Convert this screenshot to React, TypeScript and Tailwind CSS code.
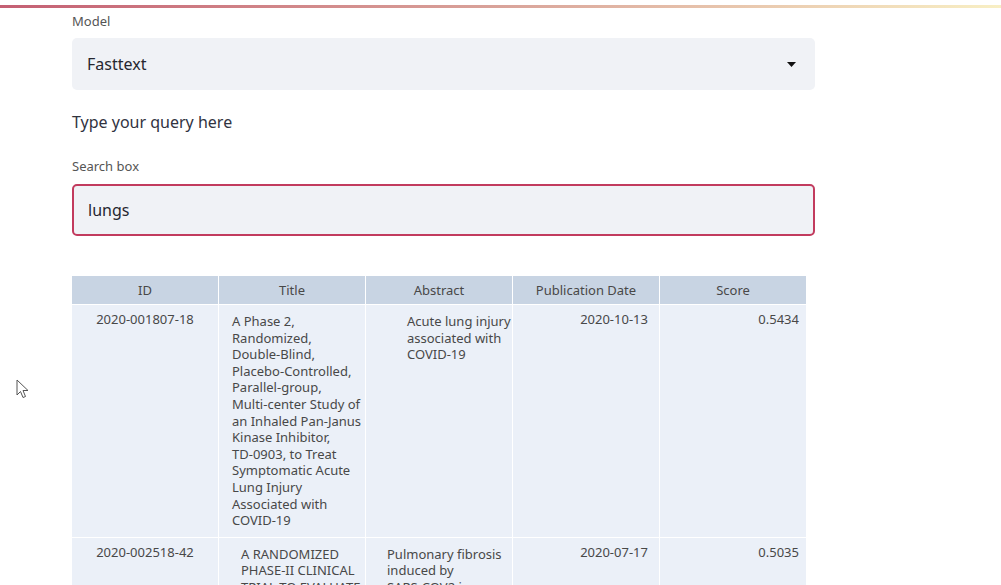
import { useState } from 'react';

const COLUMNS = ['ID', 'Title', 'Abstract', 'Publication Date', 'Score'];

const ROWS = [
  {
    id: '2020-001807-18',
    title: [
      'A Phase 2,',
      'Randomized,',
      'Double-Blind,',
      'Placebo-Controlled,',
      'Parallel-group,',
      'Multi-center Study of',
      'an Inhaled Pan-Janus',
      'Kinase Inhibitor,',
      'TD-0903, to Treat',
      'Symptomatic Acute',
      'Lung Injury',
      'Associated with',
      'COVID-19',
    ],
    titlePad: 'pl-[13px]',
    abstract: ['Acute lung injury', 'associated with', 'COVID-19'],
    abstractPad: 'pl-[41px]',
    date: '2020-10-13',
    score: '0.5434',
  },
  {
    id: '2020-002518-42',
    title: ['A RANDOMIZED', 'PHASE-II CLINICAL', 'TRIAL TO EVALUATE', 'THE EFFICACY'],
    titlePad: 'pl-[22px]',
    abstract: ['Pulmonary fibrosis', 'induced by', 'SARS-COV2 in', 'patients'],
    abstractPad: 'pl-[21px]',
    date: '2020-07-17',
    score: '0.5035',
  },
];

function Lines({ lines }: { lines: string[] }) {
  return (
    <>
      {lines.map((l, i) => (
        <div key={i} className="whitespace-nowrap">{l}</div>
      ))}
    </>
  );
}

export default function App() {
  const [query, setQuery] = useState('lungs');

  return (
    <div
      className="relative w-[1001px] h-[585px] overflow-hidden bg-white text-[#31333f]"
      style={{ fontFamily: '"Noto Sans", "Open Sans", sans-serif' }}
    >
      <div className="h-[5px]" />
      <div className="h-[3px] bg-gradient-to-r from-[#c45f73] via-[#d9a39a] to-[#f8efc4]" />

      <div className="pl-[72px] w-[815px]">
        <div className="text-[13px] text-[#555] leading-none mt-[7px]">Model</div>

        <div className="mt-[10px] h-[52px] bg-[#f0f2f6] rounded-[5px] flex items-center justify-between pl-[15px] pr-[19px]">
          <span className="text-[16px] text-[#262730]">Fasttext</span>
          <svg width="9" height="5" viewBox="0 0 9 5">
            <path d="M0 0 L9 0 L4.5 5 Z" fill="#111" />
          </svg>
        </div>

        <div className="mt-[21px] text-[16px] leading-[22px] text-[#31333f]">Type your query here</div>

        <div className="mt-[27px] text-[13px] text-[#555] leading-none">Search box</div>

        <div className="mt-[11px] h-[52px] bg-[#f0f2f6] rounded-[5px] border-2 border-[#c23b5e] flex items-center pl-[14px]">
          <input
            value={query}
            onChange={(e) => setQuery(e.target.value)}
            className="bg-transparent outline-none text-[16px] text-[#262730] w-full caret-black"
            style={{ fontFamily: '"Noto Sans", "Open Sans", sans-serif' }}
          />
        </div>
      </div>

      <div className="ml-[72px] mt-[40px] w-[734px] text-[13px] leading-[16.6px] text-[#484848]">
        <div className="grid grid-cols-5 gap-x-[1px]">
          {COLUMNS.map((c) => (
            <div key={c} className="h-[28px] bg-[#c8d4e3] flex items-center justify-center">
              {c}
            </div>
          ))}
        </div>
        {ROWS.map((r) => (
          <div key={r.id} className="grid grid-cols-5 gap-x-[1px] mt-[1px]">
            <div className="bg-[#ebf0f8] text-center pt-[6px]">{r.id}</div>
            <div className={`bg-[#ebf0f8] ${r.titlePad} pt-[8px] pb-[8px]`}>
              <Lines lines={r.title} />
            </div>
            <div className={`bg-[#ebf0f8] ${r.abstractPad} pt-[8px]`}>
              <Lines lines={r.abstract} />
            </div>
            <div className="bg-[#ebf0f8] text-right pr-[11px] pt-[6px]">{r.date}</div>
            <div className="bg-[#ebf0f8] text-right pr-[7px] pt-[6px]">{r.score}</div>
          </div>
        ))}
      </div>

      <svg className="absolute left-[16px] top-[379px]" width="15" height="22" viewBox="0 0 15 22">
        <path
          d="M1 1 L1 16 L4.5 12.5 L7 18.5 L9.5 17.5 L7 11.5 L12 11.5 Z"
          fill="#fff"
          stroke="#555"
          strokeWidth="1"
          strokeLinejoin="round"
        />
      </svg>
    </div>
  );
}
